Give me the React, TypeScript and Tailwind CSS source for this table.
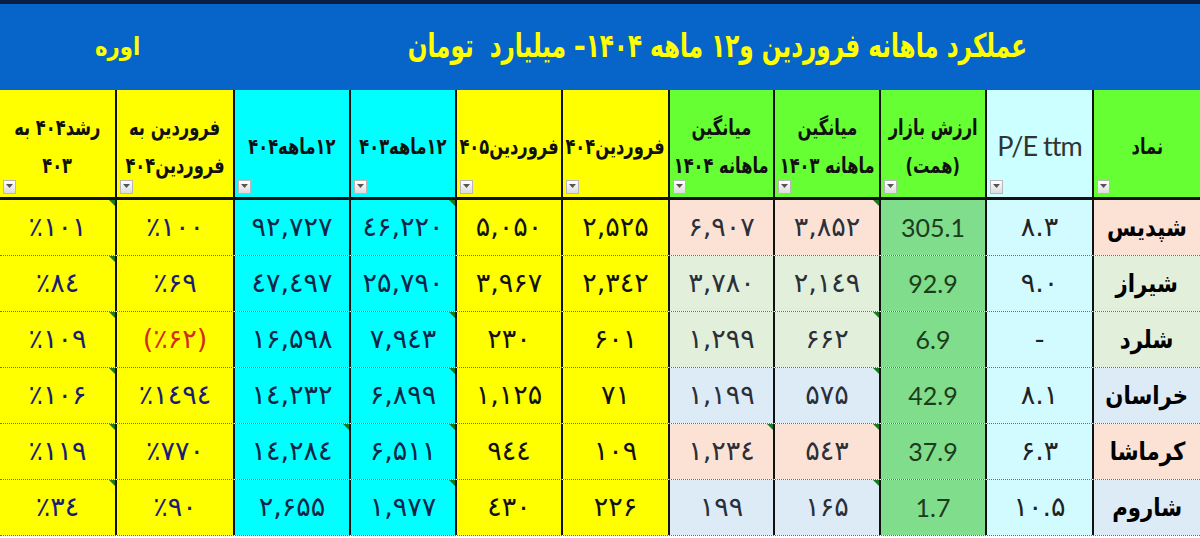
import React from 'react';

const fa = { fontFamily: '"DejaVu Sans", sans-serif' };
const latin = { fontFamily: 'Lato, "Liberation Sans", sans-serif' };

const cols = 'grid grid-cols-[117px_118px_116px_106px_106px_107px_105px_106px_106px_107px_106px]';

type Head = { lines: string[]; bg: string; latin?: boolean };

const heads: Head[] = [
  { lines: ['رشد۴۰۴ به', '۴۰۳'], bg: 'bg-[#ffff00]' },
  { lines: ['فروردین به', 'فروردین۴۰۴'], bg: 'bg-[#ffff00]' },
  { lines: ['۱۲ماهه۴۰۴'], bg: 'bg-[#00ffff]' },
  { lines: ['۱۲ماهه۴۰۳'], bg: 'bg-[#00ffff]' },
  { lines: ['فروردین۴۰۵'], bg: 'bg-[#ffff00]' },
  { lines: ['فروردین۴۰۴'], bg: 'bg-[#ffff00]' },
  { lines: ['میانگین', 'ماهانه ۱۴۰۴'], bg: 'bg-[#66ff33]' },
  { lines: ['میانگین', 'ماهانه ۱۴۰۳'], bg: 'bg-[#66ff33]' },
  { lines: ['ارزش بازار', '(همت)'], bg: 'bg-[#66ff33]' },
  { lines: ['P/E ttm'], bg: 'bg-[#ccffff]', latin: true },
  { lines: ['نماد'], bg: 'bg-[#66ff33]' },
];

// row tint used by the two average columns and the symbol column
const tint: Record<string, string> = {
  peach: 'bg-[#fbe2d5]',
  green: 'bg-[#e2efda]',
  blue: 'bg-[#ddebf7]',
};

type Row = { v: string[]; tint: string; marks: number[]; red?: number };

const rows: Row[] = [
  { v: ['٪۱۰۱', '٪۱۰۰', '۹۲,۷۲۷', '٤۶,۲۲۰', '۵,۰۵۰', '۲,۵۲۵', '۶,۹۰۷', '۳,۸۵۲', '305.1', '۸.۳', 'شپدیس'], tint: 'peach', marks: [0, 3, 7] },
  { v: ['٪۸٤', '٪۶۹', '٤۷,٤۹۷', '۲۵,۷۹۰', '۳,۹۶۷', '۲,۳٤۲', '۳,۷۸۰', '۲,۱٤۹', '92.9', '۹.۰', 'شیراز'], tint: 'green', marks: [0] },
  { v: ['٪۱۰۹', '(٪۶۲)', '۱۶,۵۹۸', '۷,۹٤۳', '۲۳۰', '۶۰۱', '۱,۲۹۹', '۶۶۲', '6.9', '-', 'شلرد'], tint: 'green', marks: [0, 3, 7], red: 1 },
  { v: ['٪۱۰۶', '٪۱٤۹٤', '۱٤,۲۳۲', '۶,۸۹۹', '۱,۱۲۵', '۷۱', '۱,۱۹۹', '۵۷۵', '42.9', '۸.۱', 'خراسان'], tint: 'blue', marks: [0, 3, 7] },
  { v: ['٪۱۱۹', '٪۷۷۰', '۱٤,۲۸٤', '۶,۵۱۱', '۹٤٤', '۱۰۹', '۱,۲۳٤', '۵٤۳', '37.9', '۶.۳', 'کرماشا'], tint: 'peach', marks: [0, 2, 3, 6, 7] },
  { v: ['٪۳٤', '٪۹۰', '۲,۶۵۵', '۱,۹۷۷', '٤۳۰', '۲۲۶', '۱۹۹', '۱۶۵', '1.7', '۱۰.۵', 'شاروم'], tint: 'blue', marks: [0, 3, 7] },
];

const textColor = [
  'text-[#1c1c78]',
  'text-[#1c1c78]',
  'text-[#0f2446]',
  'text-[#0f2446]',
  'text-[#111111]',
  'text-[#111111]',
  'text-[#2a2f3a]',
  'text-[#2a2f3a]',
  'text-[#1d3b1d]',
  'text-[#222222]',
  'text-black',
];

function cellBg(col: number, row: Row) {
  if (col <= 1 || col === 4 || col === 5) return 'bg-[#ffff00]';
  if (col === 2 || col === 3) return 'bg-[#00ffff]';
  if (col === 8) return 'bg-[#80dd8b]';
  if (col === 9) return 'bg-[#d2fbff]';
  return tint[row.tint];
}

function FilterButton() {
  return (
    <div className="absolute left-[3px] bottom-[3px] w-[13px] h-[14px] border border-[#b8b8b8] bg-gradient-to-b from-white to-[#dcdcdc] flex justify-center pt-[3px]">
      <svg width="7" height="4" viewBox="0 0 7 4">
        <path d="M0 0 L7 0 L3.5 4 Z" fill="#555" />
      </svg>
    </div>
  );
}

function Mark() {
  return (
    <div className="absolute top-0 right-0 w-0 h-0 border-l-[6px] border-l-transparent border-t-[6px] border-t-[#1b7a22]" />
  );
}

export default function App() {
  return (
    <div className="w-[1200px] h-[538px] overflow-hidden bg-white">
      {/* Banner */}
      <div className="h-[90px] border-t-4 border-[#0a1f44] bg-[#0764c8] flex" style={fa}>
        <div dir="rtl" className="w-[235px] flex items-center justify-center text-[#ffff00] font-bold text-[25px]">
          <span className="inline-block scale-x-[0.85]">اوره</span>
        </div>
        <div dir="rtl" className="flex-1 flex items-center justify-center pb-[2px] text-[#ffff00] font-bold text-[33px]">
          <span className="inline-block scale-x-[0.7] whitespace-nowrap">
            عملکرد ماهانه فروردین و۱۲ ماهه ۱۴۰۴– میلیارد&nbsp;&nbsp;تومان
          </span>
        </div>
      </div>

      {/* Header row */}
      <div className={`${cols} border-b-[3px] border-[#111]`}>
        {heads.map((h, i) => (
          <div
            key={i}
            className={`relative h-[107px] pt-[6px] ${i < 10 ? 'border-r-2 border-[#111]' : ''} ${h.bg} flex flex-col items-center justify-center`}
          >
            {h.latin ? (
              <span className="text-[27px] text-[#333] tracking-[-1px]" style={latin}>
                {h.lines[0]}
              </span>
            ) : (
              h.lines.map((l, k) => (
                <span
                  key={k}
                  dir="rtl"
                  className="inline-block font-bold text-[22px] leading-[38px] text-[#111] whitespace-nowrap scale-x-[0.74]"
                  style={fa}
                >
                  {l}
                </span>
              ))
            )}
            <FilterButton />
          </div>
        ))}
      </div>

      {/* Data rows */}
      {rows.map((r, ri) => (
        <div key={ri} className={`${cols} h-[56px] border-b border-dotted border-[#6a6a6a]`}>
          {r.v.map((val, ci) => (
            <div
              key={ci}
              className={`relative ${ci < 10 ? 'border-r-2 border-[#111]' : ''} ${cellBg(ci, r)} flex items-center justify-center`}
            >
              {ci === 8 ? (
                <span className={`text-[25px] ${textColor[ci]}`} style={latin}>
                  {val}
                </span>
              ) : ci === 10 ? (
                <span dir="rtl" className="inline-block font-bold text-[25px] text-black scale-x-[0.85]" style={fa}>
                  {val}
                </span>
              ) : (
                <span
                  dir="ltr"
                  className={`text-[27px] ${r.red === ci ? 'text-[#d0301a]' : textColor[ci]}`}
                  style={fa}
                >
                  {val}
                </span>
              )}
              {r.marks.includes(ci) && <Mark />}
            </div>
          ))}
        </div>
      ))}
    </div>
  );
}
